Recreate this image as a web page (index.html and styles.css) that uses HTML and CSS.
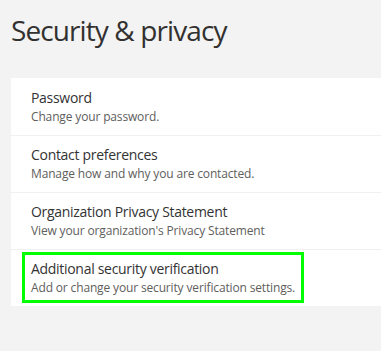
FILE: index.html
```html
<!DOCTYPE html>
<html>
<head>
<meta charset="UTF-8">
<link rel="stylesheet" href="styles.css">
</head>
<body>
<div class="page">
<h1 class="page-title">Security &amp; privacy</h1>
<ul class="settings">
<li class="row">
<a class="row-link">
<span class="row-name">Password</span>
<span class="row-desc">Change your password.</span>
</a>
</li>
<li class="row">
<a class="row-link">
<span class="row-name">Contact preferences</span>
<span class="row-desc">Manage how and why you are contacted.</span>
</a>
</li>
<li class="row">
<a class="row-link">
<span class="row-name">Organization Privacy Statement</span>
<span class="row-desc">View your organization's Privacy Statement</span>
</a>
</li>
<li class="row">
<a class="row-link highlight">
<span class="row-name">Additional security verification</span>
<span class="row-desc">Add or change your security verification settings.</span>
</a>
</li>
</ul>
</div>
</body>
</html>
```
FILE: styles.css
```css
/* Variables */

:root {
    --bg-color: #f3f3f3;
    --card-color: #ffffff;
    --line-color: #f0f0f0;
    --title-color: #333333;
    --desc-color: #605e5c;
    --highlight-color: #00ff00;
}

* {
    margin: 0;
    padding: 0;
    box-sizing: border-box;
}

body {
    background-color: var(--bg-color);
    font-family: "Open Sans", "Noto Sans", sans-serif;
    color: var(--title-color);
}

.page {
    padding: 11px 0 0 11px;
}

.page-title {
    font-size: 28px;
    font-weight: 400;
    line-height: 38px;
    letter-spacing: -0.9px;
    color: #323130;
    margin-bottom: 29px;
}

/* Card with rows */

.settings {
    list-style-type: none;
    background-color: var(--card-color);
}

.row {
    display: flex;
    align-items: flex-start;
    padding: 2px 11px 3px 11px;
    border-top: 1px solid var(--line-color);
}

.row:first-child {
    border-top: 0 none;
    padding-top: 3px;
}

.row-link {
    display: block;
    padding: 4px 6px 3px 6px;
    border: 3px solid transparent;
    cursor: pointer;
}

.highlight {
    border-color: var(--highlight-color);
}

.row-name {
    display: block;
    font-size: 14px;
    line-height: 20px;
    letter-spacing: -0.3px;
    color: var(--title-color);
}

.row-desc {
    display: block;
    font-size: 12px;
    line-height: 18px;
    letter-spacing: -0.15px;
    color: var(--desc-color);
}
```
